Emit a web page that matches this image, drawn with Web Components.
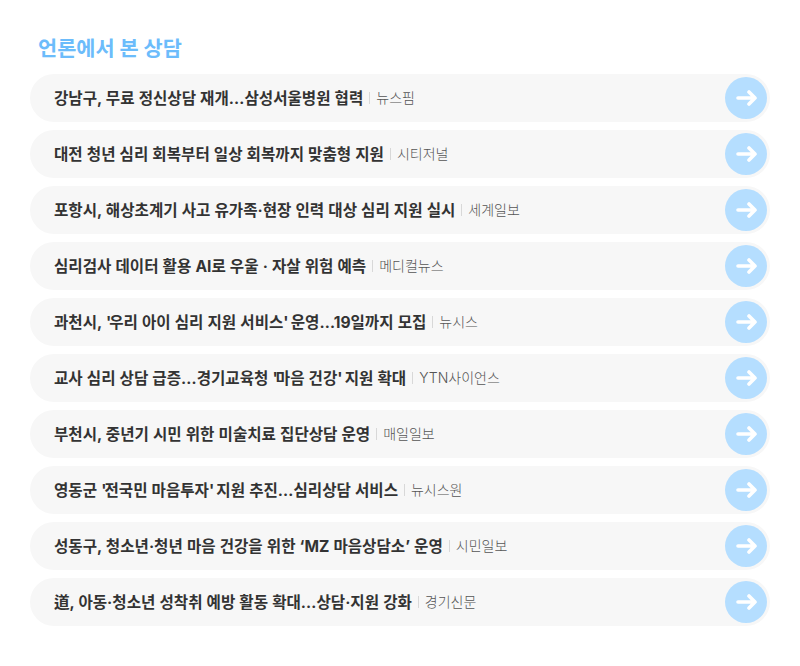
<!DOCTYPE html>
<html lang="ko">
<head>
<meta charset="utf-8">
<title>언론에서 본 상담</title>
<style>
    html, body { margin: 0; padding: 0; background: #fff; }
    body { font-family: Inter, "Noto Sans CJK KR", sans-serif; }
    /* straight quotes are narrower in the reference */
    .q { letter-spacing: -2px; }
</style>
</head>
<body>
<press-section heading="언론에서 본 상담">
    <press-row source="뉴스핌">강남구, 무료 정신상담 재개…삼성서울병원 협력</press-row>
    <press-row source="시티저널">대전 청년 심리 회복부터 일상 회복까지 맞춤형 지원</press-row>
    <press-row source="세계일보">포항시, 해상초계기 사고 유가족·현장 인력 대상 심리 지원 실시</press-row>
    <press-row source="메디컬뉴스">심리검사 데이터 활용 AI로 우울 · 자살 위험 예측</press-row>
    <press-row source="뉴시스">과천시, <span class="q">'</span>우리 아이 심리 지원 서비스<span class="q">'</span> 운영…19일까지 모집</press-row>
    <press-row source="YTN사이언스">교사 심리 상담 급증…경기교육청 <span class="q">'</span>마음 건강<span class="q">'</span> 지원 확대</press-row>
    <press-row source="매일일보">부천시, 중년기 시민 위한 미술치료 집단상담 운영</press-row>
    <press-row source="뉴시스원">영동군 <span class="q">'</span>전국민 마음투자<span class="q">'</span> 지원 추진…심리상담 서비스</press-row>
    <press-row source="시민일보">성동구, 청소년·청년 마음 건강을 위한 ‘MZ 마음상담소’ 운영</press-row>
    <press-row source="경기신문">道, 아동·청소년 성착취 예방 활동 확대…상담·지원 강화</press-row>
</press-section>

<script>
class PressSection extends HTMLElement {
    constructor(){
        super();
        this.attachShadow({mode: "open"});
    }

    connectedCallback() {
        this.shadowRoot.innerHTML = `
            <style>
                :host {
                    display: block;
                    padding: 34px 30px 0 30px;
                }
                h2 {
                    margin: 0 0 11px 8px;
                    font-size: 20.8px;
                    line-height: 29px;
                    font-weight: 700;
                    color: #6cbcfb;
                }
                .list {
                    display: flex;
                    flex-direction: column;
                    gap: 8px;
                }
            </style>
            <h2>${this.getAttribute("heading")}</h2>
            <div class="list"><slot></slot></div>
        `;
    }
}

class PressRow extends HTMLElement {
    constructor(){
        super();
        this.attachShadow({mode: "open"});
    }

    connectedCallback() {
        this.shadowRoot.innerHTML = `
            <style>
                :host {
                    display: flex;
                    align-items: center;
                    height: 48px;
                    padding: 0 3px 0 24px;
                    background: #f7f7f7;
                    border-radius: 24px;
                }
                .title {
                    padding-bottom: 2px;
                    font-size: 15.6px;
                    word-spacing: 0.4px;
                    font-weight: 700;
                    color: #333;
                    white-space: nowrap;
                }
                .bar {
                    width: 1px;
                    height: 12px;
                    margin: 0 6px 0 6px;
                    background: #d8d8d8;
                }
                .source {
                    padding-bottom: 2px;
                    font-size: 14px;
                    font-weight: 300;
                    color: #555;
                    white-space: nowrap;
                }
                .go {
                    flex: none;
                    display: flex;
                    align-items: center;
                    justify-content: center;
                    width: 42px;
                    height: 42px;
                    margin-left: auto;
                    border-radius: 50%;
                    background: #b5deff;
                }
            </style>
            <span class="title"><slot></slot></span>
            <span class="bar"></span>
            <span class="source">${this.getAttribute("source")}</span>
            <span class="go">
                <svg width="22" height="18" viewBox="0 0 22 18" fill="none" stroke="#fff" stroke-width="3.6" stroke-linecap="round" stroke-linejoin="round">
                    <path d="M3 9H20M14 3L20 9L14 15"/>
                </svg>
            </span>
        `;
    }
}

customElements.define("press-section", PressSection);
customElements.define("press-row", PressRow);
</script>
</body>
</html>
